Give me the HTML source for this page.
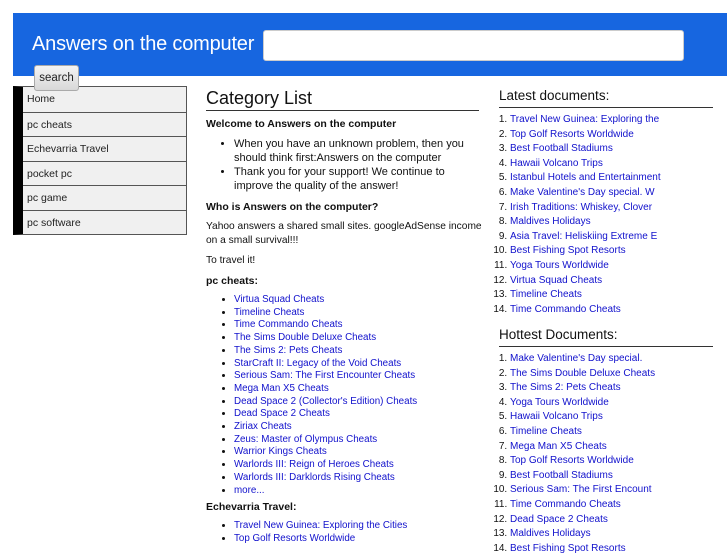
<!DOCTYPE html>
<html><head><meta charset="utf-8"><style>
*{margin:0;padding:0;box-sizing:border-box}
body{width:727px;height:545px;overflow:hidden;background:#fff;font-family:"Liberation Sans",sans-serif;color:#111;position:relative}
#hdr{position:absolute;left:13px;top:13px;width:714px;height:63px;background:#1766e0}
#hdr h1{position:absolute;left:19px;top:20px;font-size:20px;font-weight:normal;color:#fff;letter-spacing:-0.2px}
#inp{position:absolute;left:250px;top:17px;width:421px;height:31px;background:#fff;border:1px solid #ccc;border-radius:3px}
#btn{position:absolute;left:34px;top:65px;width:45px;height:26px;background:linear-gradient(#f4f4f4,#d8d8d8);border:1px solid #aaa;border-radius:3px;font-size:11.5px;text-align:center;line-height:24px;color:#222;z-index:2}
#side{position:absolute;left:13px;top:86px;width:174px;border:1px solid #555;border-left:10px solid #000;background:#f0f0f0}
#side div{height:24.5px;border-top:1px solid #555;font-size:10.5px;line-height:24px;padding-left:4px;color:#222}
#side div:first-child{border-top:none}
#main{position:absolute;left:206px;top:87px;width:273px;font-size:10.5px;line-height:14px}
#main h2{font-size:18px;font-weight:normal;border-bottom:1px solid #333;padding-bottom:1px;margin-bottom:6px;line-height:22px}
#main h3{font-size:10.5px;font-weight:bold;margin:0 0 6px}
#main p{margin-bottom:6px;font-size:10.2px;white-space:nowrap}
#main ul.big{margin:0 0 7px 28px}
#main ul.big li{font-size:11px;line-height:14px}
ul.l{list-style:disc;margin:0 0 7px 28px}
ul.l li{line-height:12.7px;font-size:9.8px}
a{color:#11c;text-decoration:none}
.rt{position:absolute;left:499px;width:214px;font-size:10px}
.rt h4{font-size:13.5px;font-weight:normal;border-bottom:1px solid #333;padding-bottom:3px;margin-bottom:5px;line-height:16px}
.rt ol{margin-left:11px;padding-left:0;list-style:decimal outside}
.rt ol li{line-height:14.6px;white-space:nowrap}
</style></head><body>
<div id="hdr"><h1>Answers on the computer</h1><div id="inp"></div></div>
<div id="btn">search</div>
<div id="side"><div>Home</div><div>pc cheats</div><div>Echevarria Travel</div><div>pocket pc</div><div>pc game</div><div>pc software</div></div>
<div id="main">
<h2>Category List</h2>
<h3>Welcome to Answers on the computer</h3>
<ul class="big"><li>When you have an unknown problem, then you should think first:Answers on the computer</li><li>Thank you for your support! We continue to improve the quality of the answer!</li></ul>
<h3>Who is Answers on the computer?</h3>
<p>Yahoo answers a shared small sites. googleAdSense income<br>on a small survival!!!</p>
<p>To travel it!</p>
<h3>pc cheats:</h3>
<ul class="l" style="margin-bottom:3px"><li><a>Virtua Squad Cheats</a></li><li><a>Timeline Cheats</a></li><li><a>Time Commando Cheats</a></li><li><a>The Sims Double Deluxe Cheats</a></li><li><a>The Sims 2: Pets Cheats</a></li><li><a>StarCraft II: Legacy of the Void Cheats</a></li><li><a>Serious Sam: The First Encounter Cheats</a></li><li><a>Mega Man X5 Cheats</a></li><li><a>Dead Space 2 (Collector's Edition) Cheats</a></li><li><a>Dead Space 2 Cheats</a></li><li><a>Ziriax Cheats</a></li><li><a>Zeus: Master of Olympus Cheats</a></li><li><a>Warrior Kings Cheats</a></li><li><a>Warlords III: Reign of Heroes Cheats</a></li><li><a>Warlords III: Darklords Rising Cheats</a></li><li><a>more...</a></li></ul>
<h3>Echevarria Travel:</h3>
<ul class="l"><li><a>Travel New Guinea: Exploring the Cities</a></li><li><a>Top Golf Resorts Worldwide</a></li></ul>
</div>
<div class="rt" style="top:88px"><h4>Latest documents:</h4><ol>
<li><a>Travel New Guinea: Exploring the</a></li><li><a>Top Golf Resorts Worldwide</a></li><li><a>Best Football Stadiums</a></li><li><a>Hawaii Volcano Trips</a></li><li><a>Istanbul Hotels and Entertainment</a></li><li><a>Make Valentine's Day special. W</a></li><li><a>Irish Traditions: Whiskey, Clover</a></li><li><a>Maldives Holidays</a></li><li><a>Asia Travel: Heliskiing Extreme E</a></li><li><a>Best Fishing Spot Resorts</a></li><li><a>Yoga Tours Worldwide</a></li><li><a>Virtua Squad Cheats</a></li><li><a>Timeline Cheats</a></li><li><a>Time Commando Cheats</a></li></ol></div>
<div class="rt" style="top:327px"><h4>Hottest Documents:</h4><ol>
<li><a>Make Valentine's Day special.</a></li><li><a>The Sims Double Deluxe Cheats</a></li><li><a>The Sims 2: Pets Cheats</a></li><li><a>Yoga Tours Worldwide</a></li><li><a>Hawaii Volcano Trips</a></li><li><a>Timeline Cheats</a></li><li><a>Mega Man X5 Cheats</a></li><li><a>Top Golf Resorts Worldwide</a></li><li><a>Best Football Stadiums</a></li><li><a>Serious Sam: The First Encount</a></li><li><a>Time Commando Cheats</a></li><li><a>Dead Space 2 Cheats</a></li><li><a>Maldives Holidays</a></li><li><a>Best Fishing Spot Resorts</a></li></ol></div>
</body></html>
